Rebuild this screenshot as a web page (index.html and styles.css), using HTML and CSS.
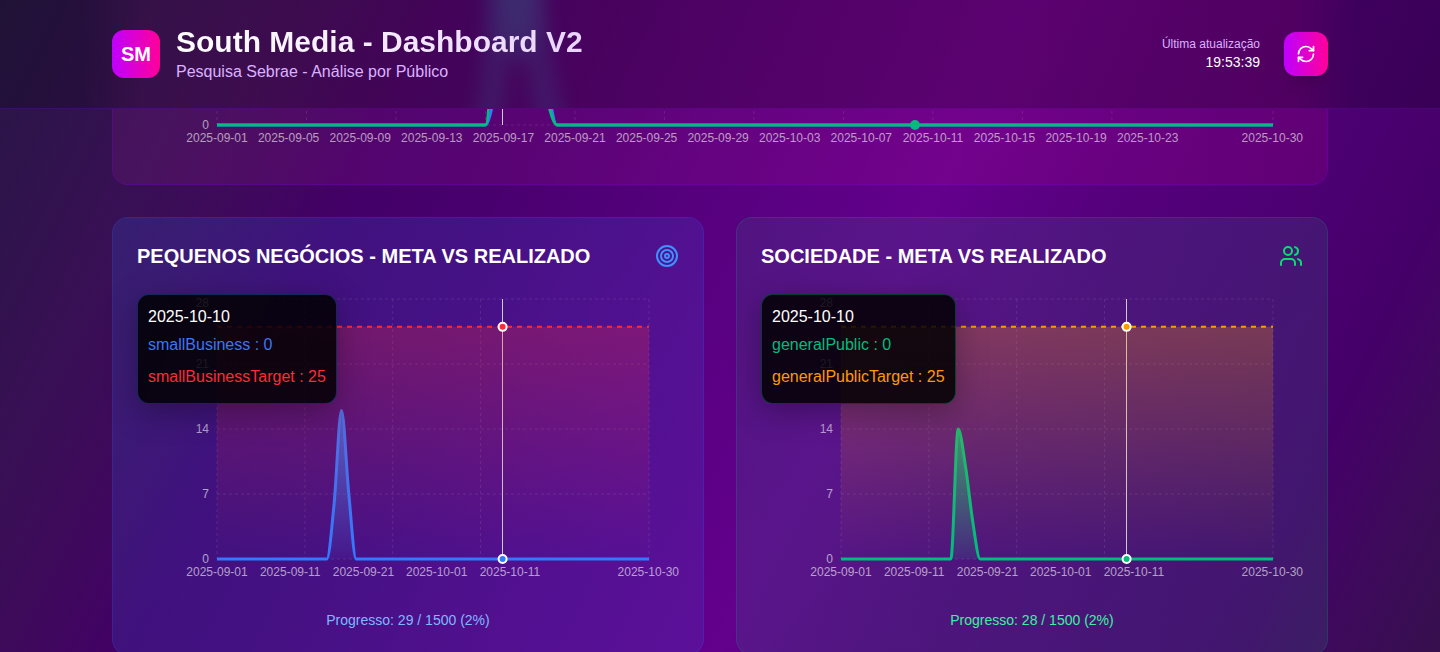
FILE: index.html
```html
<!DOCTYPE html>
<html lang="pt-BR">
<head>
<meta charset="utf-8">
<title>South Media - Dashboard V2</title>
<link rel="stylesheet" href="styles.css">
</head>
<body>
<header class="topbar">
  <svg class="topbar-glow" viewBox="0 0 1440 108" width="1440" height="108">
    <path class="glow-core" d="M497,-30H535V40L517,62L500,40Z"/>
    <path class="glow-edge" d="M484,135C493,108 497,60 501,-30M530,-30C537,60 545,108 556,135"/>
  </svg>
  <div class="topbar-inner">
    <div class="brand">
      <div class="logo">SM</div>
      <div>
        <h1 class="title"><span class="title-fill">South Media - Dashboard V2</span></h1>
        <p class="subtitle">Pesquisa Sebrae - Análise por Público</p>
      </div>
    </div>
    <div class="status">
      <div class="updated">
        <p class="updated-label">Última atualização</p>
        <p class="updated-time">19:53:39</p>
      </div>
      <button class="refresh" aria-label="Atualizar">
        <svg width="20" height="20" viewBox="0 0 24 24" class="icon"><path d="M3 12a9 9 0 0 1 9-9 9.75 9.75 0 0 1 6.74 2.74L21 8"/><path d="M21 3v5h-5"/><path d="M21 12a9 9 0 0 1-9 9 9.75 9.75 0 0 1-6.74-2.74L3 16"/><path d="M8 16H3v5"/></svg>
      </button>
    </div>
  </div>
</header>

<main class="scroller">
  <div class="content">
  <section class="card card-purple">
    <svg class="chart" viewBox="137 -140 1166 300" width="1166" height="300">
      <g class="grid">
        <path d="M217 125H1273"/>
        <path d="M217 -135V125M306.5 -135V125M396 -135V125M485.5 -135V125M575 -135V125M664.4 -135V125M753.9 -135V125M843.4 -135V125M932.9 -135V125M1022.4 -135V125M1111.9 -135V125M1273 -135V125"/>
      </g>
      <path class="cursor" d="M502.5 -135V125"/>
      <path class="line blue" d="M217,125H485.47C491.44,125 497.4,70.83 503.37,27.5C509.34,-15.83 515.3,-135 521.27,-135C527.24,-135 533.2,-32.08 539.17,11.25C545.14,54.58 551.1,125 557.07,125H1273"/>
      <path class="line green" d="M217,125H485.47C491.44,125 497.4,-102.5 503.37,-102.5C509.34,-102.5 515.3,-64.58 521.27,-37.5C527.24,-10.42 533.2,32.92 539.17,60C545.14,87.08 551.1,125 557.07,125H1273"/>
      <circle cx="915" cy="125" r="5" fill="#00bc7d"/>
      <g class="tick end"><text x="209" y="129.3">0</text></g>
      <g class="tick mid">
        <text x="217" y="142">2025-09-01</text><text x="288.6" y="142">2025-09-05</text><text x="360.2" y="142">2025-09-09</text><text x="431.8" y="142">2025-09-13</text><text x="503.4" y="142">2025-09-17</text><text x="575" y="142">2025-09-21</text><text x="646.6" y="142">2025-09-25</text><text x="718.1" y="142">2025-09-29</text><text x="789.7" y="142">2025-10-03</text><text x="861.3" y="142">2025-10-07</text><text x="932.9" y="142">2025-10-11</text><text x="1004.5" y="142">2025-10-15</text><text x="1076.1" y="142">2025-10-19</text><text x="1147.7" y="142">2025-10-23</text><text x="1272.3" y="142">2025-10-30</text>
      </g>
    </svg>
  </section>

  <div class="pair">
    <section class="card card-blue">
      <div class="card-head">
        <h2>PEQUENOS NEGÓCIOS - META VS REALIZADO</h2>
        <svg width="24" height="24" viewBox="0 0 24 24" class="icon icon-blue"><circle cx="12" cy="12" r="10"/><circle cx="12" cy="12" r="6"/><circle cx="12" cy="12" r="2"/></svg>
      </div>
      <div class="chart-box">
        <svg class="chart" viewBox="137 294 542 300" width="542" height="300">
          <defs>
            <linearGradient id="fill-blue" x1="0" y1="0" x2="0" y2="1"><stop offset="0" stop-color="#3b82f6" stop-opacity=".75"/><stop offset="1" stop-color="#3b82f6" stop-opacity=".05"/></linearGradient>
            <linearGradient id="fill-red" x1="0" y1="0" x2="0" y2="1"><stop offset="0" stop-color="#fb2c36" stop-opacity=".26"/><stop offset="1" stop-color="#fb2c36" stop-opacity="0"/></linearGradient>
          </defs>
          <g class="grid">
            <path d="M217 299H649M217 364H649M217 429H649M217 494H649M217 559H649"/>
            <path d="M217 299V559M304.9 299V559M392.7 299V559M480.6 299V559M649 299V559"/>
          </g>
          <path class="cursor" d="M502.5 299V559"/>
          <path fill="url(#fill-blue)" d="M217,559H326.83C329.27,559 331.71,528.05 334.15,503.29C336.59,478.53 339.03,410.43 341.47,410.43C343.91,410.43 346.36,469.24 348.8,494C351.24,518.76 353.68,559 356.12,559H649Z"/>
          <path class="line blue" d="M217,559H326.83C329.27,559 331.71,528.05 334.15,503.29C336.59,478.53 339.03,410.43 341.47,410.43C343.91,410.43 346.36,469.24 348.8,494C351.24,518.76 353.68,559 356.12,559H649"/>
          <path fill="url(#fill-red)" d="M217 326.86H649V559H217Z"/>
          <path class="target" stroke="#fb2c36" d="M217 326.86H649"/>
          <circle class="dot" cx="502.6" cy="326.86" r="4" fill="#fb2c36"/>
          <circle class="dot" cx="502.6" cy="559" r="4" fill="#3478ff"/>
          <g class="tick end"><text x="209" y="307.3">28</text><text x="209" y="368.3">21</text><text x="209" y="433.3">14</text><text x="209" y="498.3">7</text><text x="209" y="563.3">0</text></g>
          <g class="tick mid"><text x="217" y="576">2025-09-01</text><text x="290.2" y="576">2025-09-11</text><text x="363.4" y="576">2025-09-21</text><text x="436.7" y="576">2025-10-01</text><text x="509.9" y="576">2025-10-11</text><text x="648.3" y="576">2025-10-30</text></g>
        </svg>
        <div class="tooltip tooltip-blue">
          <p>2025-10-10</p>
          <ul><li class="c-blue">smallBusiness : 0</li><li class="c-red">smallBusinessTarget : 25</li></ul>
        </div>
      </div>
      <p class="progress p-blue">Progresso: 29 / 1500 (2%)</p>
    </section>

    <section class="card card-green">
      <div class="card-head">
        <h2>SOCIEDADE - META VS REALIZADO</h2>
        <svg width="24" height="24" viewBox="0 0 24 24" class="icon icon-green"><path d="M16 21v-2a4 4 0 0 0-4-4H6a4 4 0 0 0-4 4v2"/><circle cx="9" cy="7" r="4"/><path d="M22 21v-2a4 4 0 0 0-3-3.87"/><path d="M16 3.13a4 4 0 0 1 0 7.75"/></svg>
      </div>
      <div class="chart-box">
        <svg class="chart" viewBox="761 294 542 300" width="542" height="300">
          <defs>
            <linearGradient id="fill-green" x1="0" y1="0" x2="0" y2="1"><stop offset="0" stop-color="#10b981" stop-opacity=".75"/><stop offset="1" stop-color="#10b981" stop-opacity=".1"/></linearGradient>
            <linearGradient id="fill-orange" x1="0" y1="0" x2="0" y2="1"><stop offset="0" stop-color="#fe9a00" stop-opacity=".27"/><stop offset="1" stop-color="#fe9a00" stop-opacity="0"/></linearGradient>
          </defs>
          <g class="grid">
            <path d="M841 299H1273M841 364H1273M841 429H1273M841 494H1273M841 559H1273"/>
            <path d="M841 299V559M928.9 299V559M1016.7 299V559M1104.6 299V559M1273 299V559"/>
          </g>
          <path class="cursor" d="M1126.5 299V559"/>
          <path fill="url(#fill-green)" d="M841,559H950.83C953.27,559 955.71,429 958.15,429C960.59,429 963.03,450.66 965.47,466.14C967.91,481.62 970.36,506.38 972.8,521.86C975.24,537.34 977.68,559 980.12,559H1273Z"/>
          <path class="line green" d="M841,559H950.83C953.27,559 955.71,429 958.15,429C960.59,429 963.03,450.66 965.47,466.14C967.91,481.62 970.36,506.38 972.8,521.86C975.24,537.34 977.68,559 980.12,559H1273"/>
          <path fill="url(#fill-orange)" d="M841 326.86H1273V559H841Z"/>
          <path class="target" stroke="#fe9a00" d="M841 326.86H1273"/>
          <circle class="dot" cx="1126.6" cy="326.86" r="4" fill="#fe9a00"/>
          <circle class="dot" cx="1126.6" cy="559" r="4" fill="#00bc7d"/>
          <g class="tick end"><text x="833" y="307.3">28</text><text x="833" y="368.3">21</text><text x="833" y="433.3">14</text><text x="833" y="498.3">7</text><text x="833" y="563.3">0</text></g>
          <g class="tick mid"><text x="841" y="576">2025-09-01</text><text x="914.2" y="576">2025-09-11</text><text x="987.4" y="576">2025-09-21</text><text x="1060.7" y="576">2025-10-01</text><text x="1133.9" y="576">2025-10-11</text><text x="1272.3" y="576">2025-10-30</text></g>
        </svg>
        <div class="tooltip tooltip-green">
          <p>2025-10-10</p>
          <ul><li class="c-green">generalPublic : 0</li><li class="c-orange">generalPublicTarget : 25</li></ul>
        </div>
      </div>
      <p class="progress p-green">Progresso: 28 / 1500 (2%)</p>
    </section>
  </div>
  </div>
</main>
</body>
</html>
```
FILE: styles.css
```css
* { box-sizing: border-box; margin: 0; padding: 0; }

html { height: 652px; overflow: hidden; }

body {
  display: flex;
  flex-direction: column;
  height: 652px;
  overflow: hidden;
  font-family: "Liberation Sans", Arial, sans-serif;
  font-size: 16px;
  line-height: 24px;
  color: #fff;
  background: linear-gradient(115.6deg,
    #281644 0px, #2f134c 100px, #371053 190px, #3e0a5b 290px, #430067 400px, #48006e 520px,
    #57007f 730px, #63008c 930px, #55007c 1090px, #4a0070 1300px,
    #450068 1390px, #3e0a5c 1480px, #370f4f 1570px);
}

.topbar {
  position: relative;
  flex: none;
  padding: 24px 112px;
  background:
    linear-gradient(rgba(0, 0, 0, .2), rgba(0, 0, 0, .2)),
    linear-gradient(90deg,
      rgba(180, 45, 165, 0) 84px, rgba(180, 45, 165, .06) 112px, rgba(180, 45, 165, .12) 142px,
      rgba(220, 0, 140, .14) 1298px, rgba(220, 0, 140, .07) 1328px, rgba(220, 0, 140, 0) 1356px);
  border-bottom: 1px solid rgba(152, 16, 250, .2);
}
.topbar-glow {
  position: absolute;
  top: 0;
  left: 0;
  overflow: hidden;
}
.glow-core { fill: #35608a; opacity: .35; filter: blur(11px); }
.glow-edge {
  fill: none;
  stroke: #35588a;
  stroke-width: 13;
  opacity: .5;
  filter: blur(12px);
}
.topbar-inner, .brand, .status { display: flex; align-items: center; }
.topbar-inner { position: relative; justify-content: space-between; }
.brand { gap: 16px; }
.status { gap: 24px; }

.logo {
  display: flex;
  align-items: center;
  justify-content: center;
  width: 48px;
  height: 48px;
  border-radius: 12px;
  background: linear-gradient(90deg, #bf00ff, #ff0099);
  font-size: 20px;
  font-weight: 700;
}
.title { font-size: 30px; line-height: 36px; font-weight: 700; }
.title-fill {
  display: inline-block;
  background: linear-gradient(90deg, #fff, #e9d4ff);
  background-clip: text;
  -webkit-background-clip: text;
  color: transparent;
}
.subtitle { color: #dab2ff; }
.updated { text-align: right; }
.updated-label { font-size: 12px; line-height: 16px; color: #dab2ff; }
.updated-time { font-size: 14px; line-height: 20px; }
.refresh {
  display: flex;
  align-items: center;
  justify-content: center;
  width: 44px;
  height: 44px;
  border: 0;
  border-radius: 12px;
  background: linear-gradient(90deg, #bf00ff, #ff0099);
  box-shadow: 0 10px 15px -3px rgba(0, 0, 0, .1), 0 4px 6px -4px rgba(0, 0, 0, .1);
  color: #fff;
}
.icon {
  fill: none;
  stroke: currentColor;
  stroke-width: 2;
  stroke-linecap: round;
  stroke-linejoin: round;
}
.icon-blue { color: #3c93ff; }
.icon-green { color: #05df72; }

/* Scrolled content */
.scroller { flex: 1; min-height: 0; overflow: hidden; }
.content {
  display: flex;
  flex-direction: column;
  gap: 32px;
  width: 1216px;
  margin: -274px auto 0;
}
.pair { display: grid; grid-template-columns: 1fr 1fr; gap: 32px; }
.card { padding: 24px; border: 1px solid; border-radius: 16px; }
.card-purple {
  background: linear-gradient(90deg, rgba(180, 45, 165, .13), rgba(220, 0, 140, .15)) padding-box;
  border-color: rgba(160, 0, 235, .32);
}
.card-blue {
  background: linear-gradient(135deg, rgba(50, 110, 255, .17), rgba(55, 120, 255, .13)) padding-box;
  border-color: rgba(43, 110, 255, .3);
}
.card-green {
  background: linear-gradient(135deg, rgba(20, 180, 130, .11), rgba(50, 150, 150, .15)) padding-box;
  border-color: rgba(0, 201, 120, .25);
}
.card-head {
  display: flex;
  align-items: center;
  justify-content: space-between;
  height: 28px;
  margin-bottom: 24px;
}
.card-head h2 { font-size: 20px; line-height: 28px; font-weight: 700; }

/* Charts */
.chart-box { position: relative; }
.chart { display: block; overflow: visible; }
.grid path { fill: none; stroke: rgba(255, 255, 255, .1); stroke-dasharray: 3 3; }
.cursor { fill: none; stroke: #ccc; }
.line { fill: none; stroke-width: 3; }
.blue { stroke: #3478ff; }
.green { stroke: #00bc7d; }
.target { fill: none; stroke-width: 2; stroke-dasharray: 5 5; }
.dot { stroke: #fff; stroke-width: 2; }
.tick { font-size: 12px; fill: rgba(255, 255, 255, .6); }
.end { text-anchor: end; }
.mid { text-anchor: middle; }

.tooltip {
  position: absolute;
  top: 0;
  left: 0;
  padding: 10px;
  border: 1px solid;
  border-radius: 12px;
  background: rgba(0, 0, 0, .85);
  box-shadow: 0 8px 32px rgba(0, 0, 0, .3);
  white-space: nowrap;
}
.tooltip ul { list-style: none; }
.tooltip li { padding: 4px 0; }
.tooltip-blue { border-color: rgba(43, 127, 255, .3); }
.tooltip-green { border-color: rgba(0, 188, 125, .3); }
.c-blue { color: #3b77f5; }
.c-red { color: #fb2c36; }
.c-green { color: #00bc7d; }
.c-orange { color: #fe9a00; }

.progress { margin-top: 16px; font-size: 14px; line-height: 20px; text-align: center; }
.p-blue { color: #7fb8ff; }
.p-green { color: #3df0a0; }
```
